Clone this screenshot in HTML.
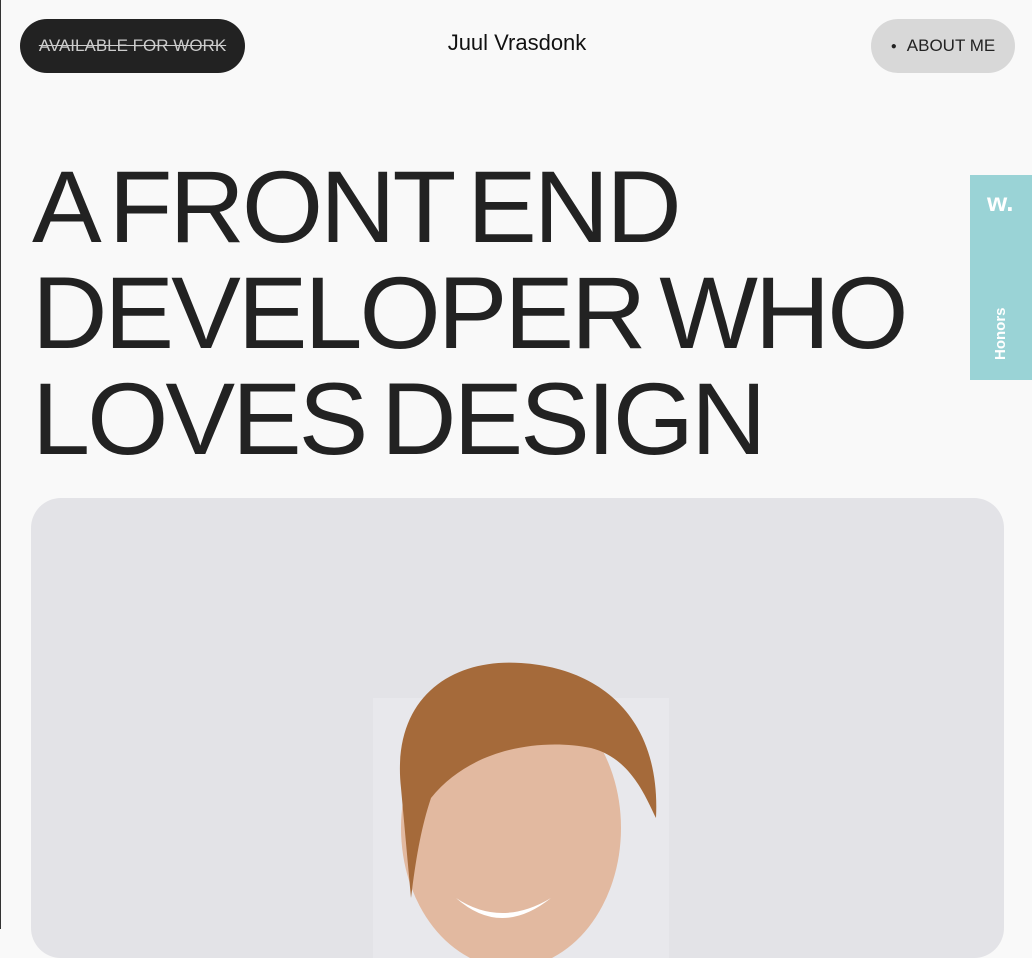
<!DOCTYPE html>
<html><head><style>
body{margin:0;width:1032px;height:929px;overflow:hidden;background:#f9f9f9;font-family:"Liberation Sans",sans-serif;position:relative;border-left:1px solid #333;box-sizing:border-box}
.pill{position:absolute;top:19px;height:54px;border-radius:27px;display:flex;align-items:center;justify-content:center;font-size:17px}
.a{left:19px;width:225px;background:#222;color:#ccc;text-decoration:line-through}
.b{left:870px;width:144px;background:#d8d8d8;color:#222}
.name{position:absolute;top:30px;left:0;width:1032px;text-align:center;font-size:22px;color:#111}
h1{position:absolute;left:31px;top:154px;margin:0;font-weight:400;font-size:102px;line-height:106px;letter-spacing:-3px;word-spacing:-10px;color:#222;transform:scaleX(1.025);transform-origin:0 0;white-space:nowrap}
.tab{position:absolute;left:969px;top:175px;width:63px;height:205px;background:#9ad3d6;color:#fff}
.tab .w{position:absolute;top:12px;left:17px;font-weight:bold;font-size:26px}
.card{position:absolute;left:30px;top:498px;width:973px;height:460px;background:#e3e3e7;border-radius:30px;overflow:hidden}
</style></head><body>
<div class="pill a">AVAILABLE FOR WORK</div>
<div class="name">Juul Vrasdonk</div>
<div class="pill b"><span style="font-size:10px;margin-right:10px">●</span>ABOUT ME</div>
<h1>A FRONT END<br>DEVELOPER WHO<br>LOVES DESIGN</h1>
<div class="tab"><div class="w">w.</div>
<div style="position:absolute;left:22px;top:185px;transform:rotate(-90deg);transform-origin:0 0;font-size:15px;font-weight:bold">Honors</div></div>
<div class="card">
<svg width="973" height="460" style="position:absolute;left:0;top:0">
<rect x="342" y="200" width="296" height="260" fill="#e8e8ec"/>
<ellipse cx="480" cy="330" rx="110" ry="140" fill="#e2b9a0"/>
<path d="M370 290 C360 200 420 160 490 165 C570 170 630 220 625 320 C615 300 600 260 560 250 C510 240 440 250 400 300 C390 330 385 360 380 400 Z" fill="#a56a3a"/>
<path d="M425 400 Q470 430 520 400 Q470 440 425 400Z" fill="#fff"/>
</svg>
</div>
</body></html>
